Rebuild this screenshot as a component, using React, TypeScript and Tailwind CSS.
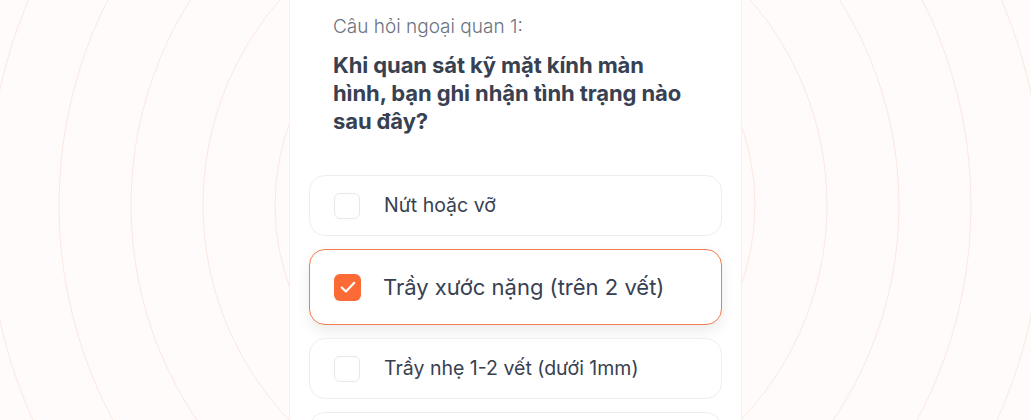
import React from 'react';

const options = [
  { id: 1, label: 'Nứt hoặc vỡ', checked: false },
  { id: 2, label: 'Trầy xước nặng (trên 2 vết)', checked: true },
  { id: 3, label: 'Trầy nhẹ 1-2 vết (dưới 1mm)', checked: false },
  { id: 4, label: 'Không có vết trầy', checked: false },
];

function Rings() {
  const radii = [168, 240, 312, 384, 456, 528, 600];
  return (
    <svg className="absolute inset-0 pointer-events-none" width="1031" height="420" viewBox="0 0 1031 420">
      {radii.map((r) => (
        <circle key={r} cx="515" cy="205" r={r} fill="none" stroke="#fbe8e2" strokeWidth="1" />
      ))}
    </svg>
  );
}

export default function App() {
  return (
    <div className="relative h-[420px] w-full overflow-hidden bg-[#fffbfa] flex justify-center" style={{ fontFamily: 'Inter, "Noto Sans", sans-serif' }}>
      <Rings />
      <div className="relative w-[451px] bg-white shadow-[0_0_0_1px_#fcefea] px-[19px] pt-[13px]">
        <div className="px-6">
          <p className="text-[19px] leading-[28px] text-[#6b7280] font-light">Câu hỏi ngoại quan 1:</p>
          <h2 className="mt-[10px] text-[22px] leading-[28px] font-bold text-[#374151] tracking-[-0.1px]">
            Khi quan sát kỹ mặt kính màn hình, bạn ghi nhận tình trạng nào sau đây?
          </h2>
        </div>
        <div className="mt-[40px] flex flex-col gap-[13px]">
          {options.map((o) =>
            o.checked ? (
              <div key={o.id} className="flex items-center gap-6 rounded-2xl border-[1.5px] border-[#f27d50] bg-white px-6 h-[76px] shadow-[0_6px_14px_rgba(0,0,0,0.08)]">
                <div className="w-[27px] h-[27px] rounded-md bg-[#fc6b35] flex items-center justify-center shrink-0">
                  <svg width="20" height="20" viewBox="0 0 24 24" fill="none" stroke="white" strokeWidth="2.6" strokeLinecap="round" strokeLinejoin="round">
                    <path d="M4.5 12.5l5 5L19.5 7" />
                  </svg>
                </div>
                <span className="text-[22px] text-[#374151] -ml-[2px]">{o.label}</span>
              </div>
            ) : (
              <div key={o.id} className="flex items-center gap-6 rounded-2xl border-[1.5px] border-[#eeeeef] bg-white px-6 h-[61px]">
                <div className="w-[26px] h-[26px] rounded-md border-[1.5px] border-[#e8e8ea] shrink-0" />
                <span className="text-[19.5px] text-[#374151]">{o.label}</span>
              </div>
            )
          )}
        </div>
      </div>
    </div>
  );
}
